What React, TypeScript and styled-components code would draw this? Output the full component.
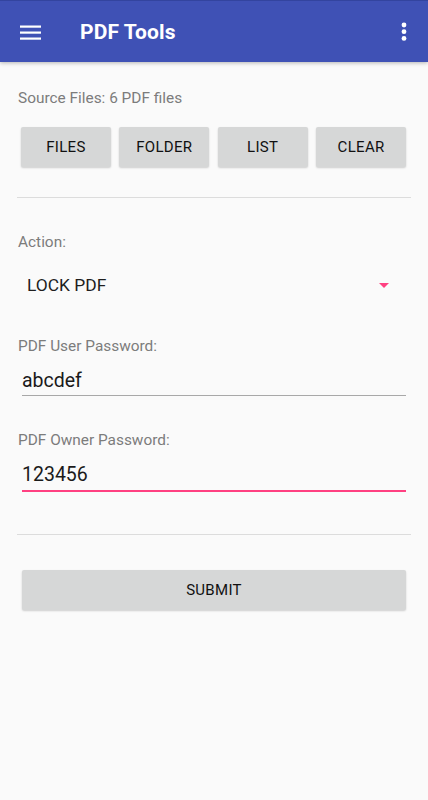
import React from "react";
import styled, { createGlobalStyle } from "styled-components";

const Global = createGlobalStyle`
  html, body { margin: 0; padding: 0; background: #fafafa; }
  body { font-family: Roboto, "Noto Sans", "Liberation Sans", sans-serif; }
  * { box-sizing: border-box; }
`;

const Page = styled.div`
  width: 428px;
  min-height: 800px;
  background: #fafafa;
`;

const AppBar = styled.header`
  height: 62px;
  background: #3f51b5;
  border-top: 1px solid #33449f;
  display: flex;
  align-items: center;
  padding: 0 20px 0 20px;
  box-shadow: 0 1px 4px rgba(0, 0, 0, 0.28);
  position: relative;
`;

const Title = styled.h1`
  margin: 0 0 0 38px;
  flex: 1;
  color: #fff;
  font-size: 21px;
  font-weight: 700;
  letter-spacing: 0.1px;
`;

const IconBtn = styled.div`
  display: flex;
  align-items: center;
  justify-content: center;
`;

const Content = styled.main`
  padding: 0 18px 0 18px;
`;

const Label = styled.div<{ $mt: number }>`
  margin-top: ${(p) => p.$mt}px;
  height: 20px;
  line-height: 20px;
  font-size: 15.4px;
  color: #7c7c7c;
`;

const ButtonRow = styled.div`
  margin: 19px 4px 0 3px;
  display: grid;
  grid-template-columns: repeat(4, 1fr);
  column-gap: 8.5px;
`;

const Button = styled.button<{ $mt?: number }>`
  height: 40px;
  margin-top: ${(p) => p.$mt ?? 0}px;
  border: none;
  border-radius: 2px;
  background: #d6d7d7;
  box-shadow: 0 1px 2px rgba(0, 0, 0, 0.18);
  font-family: Roboto, "Noto Sans", "Liberation Sans", sans-serif;
  font-size: 15px;
  font-weight: 400;
  color: #111;
  letter-spacing: 0.3px;
  padding: 0;
`;

const WideButton = styled(Button)`
  display: block;
  width: calc(100% - 8px);
  margin-left: 4px;
  margin-right: 4px;
`;

const Divider = styled.hr<{ $mt: number }>`
  margin: ${(p) => p.$mt}px -1px 0 -1px;
  border: none;
  height: 1px;
  background: #dcdcdc;
`;

const Spinner = styled.div`
  margin-top: 13px;
  height: 40px;
  display: flex;
  align-items: center;
  padding: 0 21px 0 9px;
`;

const SpinnerText = styled.div`
  flex: 1;
  font-size: 17.4px;
  color: #1e1e1e;
`;

const Field = styled.div<{ $focused?: boolean }>`
  margin: 12px 4px 0 4px;
  height: ${(p) => (p.$focused ? 30 : 28)}px;
  line-height: 26px;
  font-size: 19.5px;
  color: #1a1a1a;
  padding-bottom: 1px;
  border-bottom: ${(p) => (p.$focused ? "2px solid #ff4081" : "1px solid #a8a8a8")};
`;

export default function App() {
  return (
    <Page>
      <Global />
      <AppBar>
        <IconBtn>
          <svg width="22" height="16" viewBox="0 0 22 16">
            <rect x="0" y="1.5" width="21" height="2.2" fill="#fff" />
            <rect x="0" y="7.5" width="21" height="2.2" fill="#fff" />
            <rect x="0" y="13.5" width="21" height="2.2" fill="#fff" />
          </svg>
        </IconBtn>
        <Title>PDF Tools</Title>
        <IconBtn>
          <svg width="8" height="20" viewBox="0 0 8 20">
            <circle cx="4" cy="3" r="2.4" fill="#fff" />
            <circle cx="4" cy="9.7" r="2.4" fill="#fff" />
            <circle cx="4" cy="16.4" r="2.4" fill="#fff" />
          </svg>
        </IconBtn>
      </AppBar>
      <Content>
        <Label $mt={26}>Source Files: 6 PDF files</Label>
        <ButtonRow>
          <Button>FILES</Button>
          <Button>FOLDER</Button>
          <Button>LIST</Button>
          <Button>CLEAR</Button>
        </ButtonRow>
        <Divider $mt={30} />
        <Label $mt={34}>Action:</Label>
        <Spinner>
          <SpinnerText>LOCK PDF</SpinnerText>
          <svg width="10" height="5" viewBox="0 0 10 5">
            <polygon points="0,0 10,0 5,5" fill="#ff4081" />
          </svg>
        </Spinner>
        <Label $mt={31}>PDF User Password:</Label>
        <Field>abcdef</Field>
        <Label $mt={34}>PDF Owner Password:</Label>
        <Field $focused>123456</Field>
        <Divider $mt={42} />
        <WideButton $mt={35}>SUBMIT</WideButton>
      </Content>
    </Page>
  );
}
